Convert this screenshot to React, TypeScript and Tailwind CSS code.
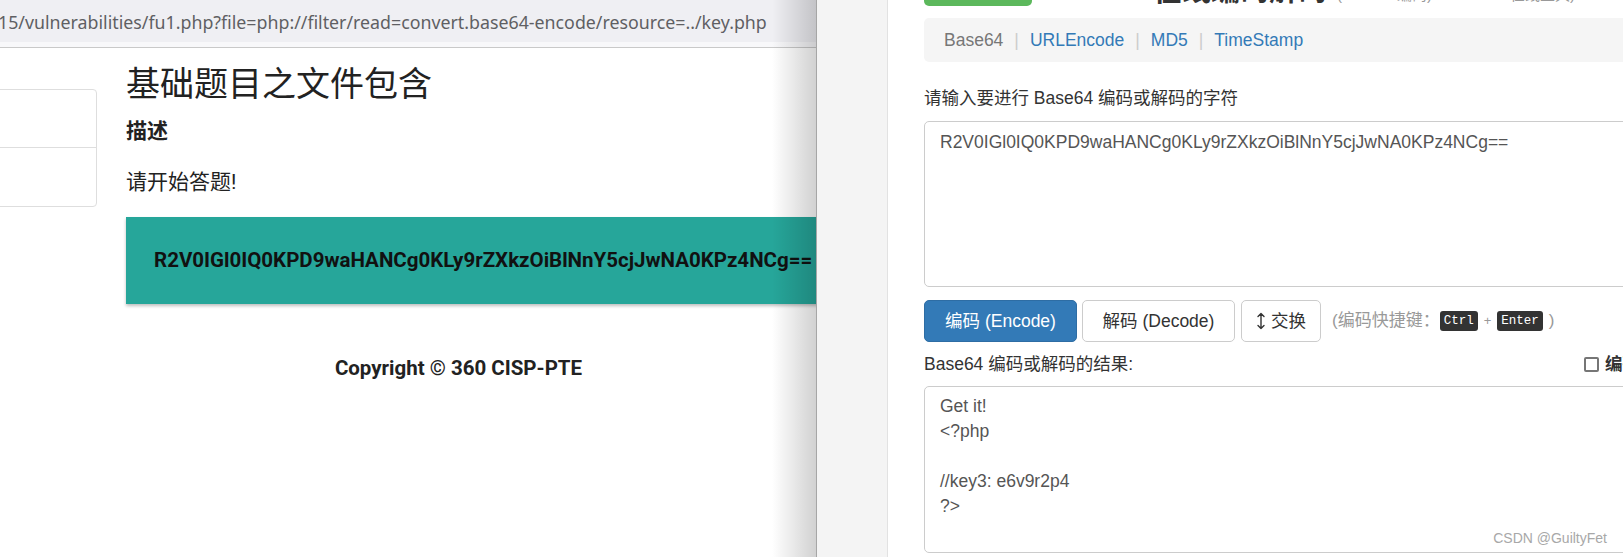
const leftFont = "font-['Roboto','Noto_Sans_CJK_SC',sans-serif]";
const rightFont = "font-['Liberation_Sans','Noto_Sans_CJK_SC',sans-serif]";

function SwapIcon() {
  return (
    <svg width="10" height="18" viewBox="0 0 10 18" fill="none" stroke="#333" strokeWidth={1.4}>
      <path d="M5 1.5v15M2 4.5l3-3 3 3M2 13.5l3 3 3-3" strokeLinecap="round" strokeLinejoin="round" />
    </svg>
  );
}

function Kbd({ children }: { children: string }) {
  return (
    <span className="inline-flex h-[20px] items-center rounded-[3px] bg-[#333] px-[4px] font-['Liberation_Mono',monospace] text-[12.5px] text-white">
      {children}
    </span>
  );
}

function LeftPage() {
  return (
    <div className={`relative w-[816px] shrink-0 overflow-hidden bg-white ${leftFont}`}>
      {/* address bar */}
      <div className="border-b border-[#c9c9c9]">
        <div className="flex h-[42px] items-center bg-[#efeff3] pt-[2px] font-['Noto_Sans',sans-serif] text-[17.8px] text-[#5f5f63]">
          <span className="-ml-[2px] whitespace-nowrap">
            15/vulnerabilities/fu1.php?file=php://filter/read=convert.base64-encode/resource=../key.php
          </span>
        </div>
        <div className="h-[5px] bg-[#f8f8fa]" />
      </div>

      <div className="flex">
        {/* sidebar list */}
        <div className="mt-[41px] -ml-px h-[118px] w-[98px] shrink-0 rounded-r-[4px] border border-[#dedede]">
          <div className="h-[58px] border-b border-[#dedede]" />
        </div>

        <div className="ml-[29px] w-[760px] shrink-0 text-[#222]">
          <h1 className="mt-[16px] text-[34px] leading-[40px] font-normal">基础题目之文件包含</h1>
          <h5 className="mt-[13px] text-[21px] leading-[28px] font-bold">描述</h5>
          <p className="mt-[22px] text-[21px] leading-[30px]">请开始答题!</p>
          <div className="mt-[20px] flex h-[87px] items-center bg-[#26a69a] px-[28px] shadow-[0_2px_3px_rgba(0,0,0,0.25)]">
            <span className="text-[20.5px] font-bold whitespace-nowrap text-[#111]">
              R2V0IGl0IQ0KPD9waHANCg0KLy9rZXkzOiBlNnY5cjJwNA0KPz4NCg==
            </span>
          </div>
          <div className="mt-[50px] w-[665px] text-center text-[20.5px] leading-[28px] font-bold text-[#222]">
            Copyright © 360 CISP-PTE
          </div>
        </div>
      </div>

      {/* shadow cast by the side panel */}
      <div className="pointer-events-none absolute top-0 right-0 bottom-0 w-[44px] bg-linear-to-r from-transparent to-black/[0.18]" />
    </div>
  );
}

function RightPanel() {
  return (
    <div className={`min-w-0 flex-1 overflow-hidden bg-white pl-[36px] text-[17.5px] text-[#333] ${rightFont}`}>
      <div className="w-[780px]">
        {/* header, scrolled mostly out of view */}
        <div className="-mt-[34px] flex h-[40px] items-end">
          <div className="h-[40px] w-[108px] rounded-[5px] bg-[#5cb85c]" />
          <span className="ml-[121px] text-[29px] leading-none font-bold text-[#333]">在线编码解码</span>
          <span className="mb-[4px] ml-[10px] text-[15px] leading-none text-[#999]">(Base64 编码)</span>
          <span className="mb-[4px] ml-[78px] text-[15px] leading-none text-[#999]">在线工具)</span>
        </div>

        {/* breadcrumb tabs */}
        <div className="mt-[12px] flex h-[44px] items-center rounded-[5px] bg-[#f5f5f5] px-[20px]">
          <span className="text-[#777]">Base64</span>
          <span className="px-[11px] text-[#ccc]">|</span>
          <span className="text-[#337ab7]">URLEncode</span>
          <span className="px-[11px] text-[#ccc]">|</span>
          <span className="text-[#337ab7]">MD5</span>
          <span className="px-[11px] text-[#ccc]">|</span>
          <span className="text-[#337ab7]">TimeStamp</span>
        </div>

        <div className="mt-[24px] leading-[25px]">请输入要进行 Base64 编码或解码的字符</div>
        <div className="mt-[10px] h-[166px] rounded-[5px] border border-[#ccc] px-[15px] py-[7.5px] leading-[25px] text-[#555]">
          R2V0IGl0IQ0KPD9waHANCg0KLy9rZXkzOiBlNnY5cjJwNA0KPz4NCg==
        </div>

        {/* actions */}
        <div className="mt-[13px] flex h-[42px] items-center">
          <button className="h-[42px] w-[153px] rounded-[5px] border border-[#2e6da4] bg-[#337ab7] text-white">
            编码 (Encode)
          </button>
          <button className="ml-[5px] h-[42px] w-[153px] rounded-[5px] border border-[#ccc] bg-white">
            解码 (Decode)
          </button>
          <button className="ml-[6px] flex h-[42px] w-[80px] items-center justify-center gap-[5px] rounded-[5px] border border-[#ccc] bg-white">
            <SwapIcon />
            <span>交换</span>
          </button>
          <span className="ml-[11px] text-[17px] text-[#999]">(编码快捷键：</span>
          <Kbd>Ctrl</Kbd>
          <span className="mx-[6px] text-[13px] text-[#999]">+</span>
          <Kbd>Enter</Kbd>
          <span className="ml-[6px] text-[17px] text-[#999]">)</span>
        </div>

        <div className="mt-[10px] flex items-center leading-[25px]">
          <div className="w-[660px] shrink-0">Base64 编码或解码的结果:</div>
          <span className="h-[15px] w-[15px] rounded-[2px] border-2 border-[#767676] bg-white" />
          <span className="ml-[6px] font-bold">编码结果</span>
        </div>
        <div className="mt-[8.5px] h-[167px] rounded-[5px] border border-[#ccc] px-[15px] py-[7.5px] leading-[25px] text-[#555]">
          <div>Get it!</div>
          <div>&lt;?php</div>
          <div>&nbsp;</div>
          <div>//key3: e6v9r2p4</div>
          <div>?&gt;</div>
        </div>
      </div>
    </div>
  );
}

export default function App() {
  return (
    <div className="relative flex h-[557px] w-[1623px] overflow-hidden bg-white">
      <LeftPage />
      <div className="w-px shrink-0 bg-[#a6a6a6]" />
      <div className="w-[71px] shrink-0 border-r border-[#e2e2e2] bg-[#f4f4f4]" />
      <RightPanel />
      <span className="absolute right-[16px] bottom-[8px] font-['Liberation_Sans',sans-serif] text-[14px] text-[#a8a8a8]">
        CSDN @GuiltyFet
      </span>
    </div>
  );
}
